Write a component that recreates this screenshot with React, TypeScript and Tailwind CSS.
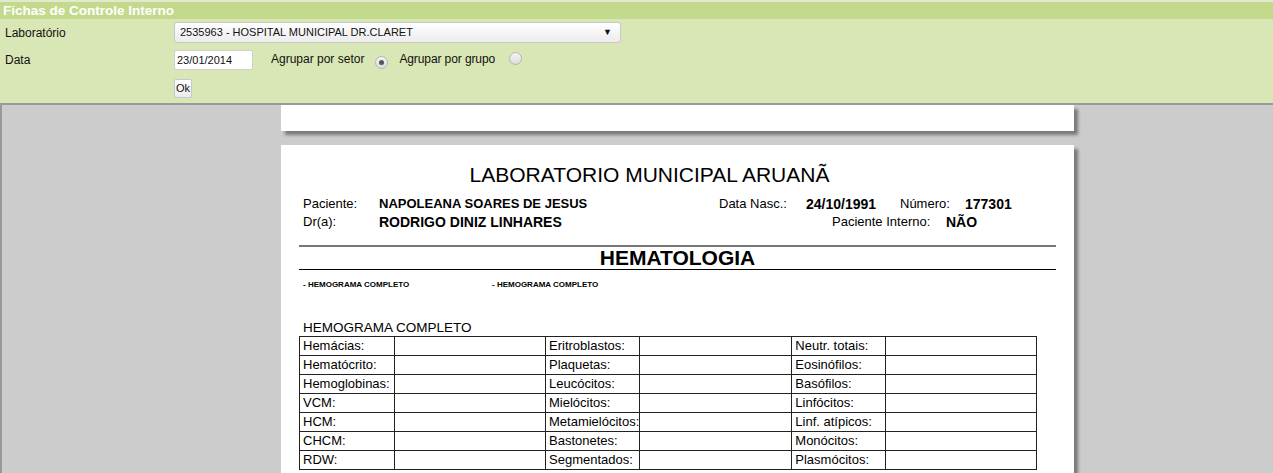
import React from 'react'

const rows: [string, string, string][] = [
  ['Hemácias:', 'Eritroblastos:', 'Neutr. totais:'],
  ['Hematócrito:', 'Plaquetas:', 'Eosinófilos:'],
  ['Hemoglobinas:', 'Leucócitos:', 'Basófilos:'],
  ['VCM:', 'Mielócitos:', 'Linfócitos:'],
  ['HCM:', 'Metamielócitos:', 'Linf. atípicos:'],
  ['CHCM:', 'Bastonetes:', 'Monócitos:'],
  ['RDW:', 'Segmentados:', 'Plasmócitos:'],
]

function Radio({ checked }: { checked?: boolean }) {
  return (
    <span className="inline-flex h-[13px] w-[13px] items-center justify-center rounded-full border border-[#b5b5b5] bg-gradient-to-b from-[#f4f4f4] to-[#dcdcdc]">
      {checked && <span className="h-[5px] w-[5px] rounded-full bg-[#555]" />}
    </span>
  )
}

function FilterPanel() {
  return (
    <div className="border-t-2 border-b-2 border-t-[#e2e9cf] border-b-[#9a9a9a] bg-[#d9e6b5] font-['Liberation_Sans',Arial,sans-serif]">
      <div className="h-[17px] bg-[#c3d98b] pl-[3px] text-[13.5px] font-bold leading-[17px] text-white">
        Fichas de Controle Interno
      </div>
      <div className="flex h-[84px] flex-col pt-[3px] text-[12px] text-[#111]">
        <div className="flex h-[21px] items-center">
          <div className="w-[174px] pl-[5px]">Laboratório</div>
          <div className="flex h-[21px] w-[447px] items-center justify-between rounded-[3px] border border-[#c8c8c8] bg-gradient-to-b from-white to-[#ececec] pr-[8px] pl-[5px] text-[11px]">
            <span>2535963 - HOSPITAL MUNICIPAL DR.CLARET</span>
            <span className="text-[9px]">▼</span>
          </div>
        </div>
        <div className="mt-[7px] flex h-[20px] items-center">
          <div className="w-[174px] pl-[5px]">Data</div>
          <div className="flex h-[20px] w-[79px] items-center rounded-[2px] border border-[#d0d0d0] bg-white pl-[2px] text-[11px]">
            23/01/2014
          </div>
          <span className="ml-[18px] -mt-[2px]">Agrupar por setor</span>
          <span className="ml-[11px] mt-[2px]"><Radio checked /></span>
          <span className="ml-[11px] -mt-[2px] tracking-[-0.1px]">Agrupar por grupo</span>
          <span className="ml-[14px] mt-[2px]"><Radio /></span>
        </div>
        <div className="mt-[9px] flex h-[19px] items-center pl-[174px]">
          <div className="flex h-[19px] w-[18px] items-center justify-center rounded-[2px] border border-[#c8c8c8] bg-gradient-to-b from-white to-[#ececec] text-[11px]">
            Ok
          </div>
        </div>
      </div>
    </div>
  )
}

function Report() {
  return (
    <div className="h-[360px] w-[793px] bg-white px-[18px] pt-[16px] font-['Liberation_Sans',Arial,sans-serif] text-black shadow-[4px_4px_3px_#7a7a7a]">
      <div className="pr-[56px] text-center text-[21px] leading-[28px]">LABORATORIO MUNICIPAL ARUANÃ</div>
      <div className="mt-[6px] pl-[4px] text-[13px] leading-[18px]">
        <div className="flex">
          <span className="w-[76px]">Paciente:</span>
          <span className="w-[340px] font-bold">NAPOLEANA SOARES DE JESUS</span>
          <span className="w-[87px]">Data Nasc.:</span>
          <span className="w-[94px] text-[14px] font-bold">24/10/1991</span>
          <span className="w-[65px]">Número:</span>
          <span className="text-[14px] font-bold">177301</span>
        </div>
        <div className="flex">
          <span className="w-[76px]">Dr(a):</span>
          <span className="w-[453px] text-[14px] font-bold">RODRIGO DINIZ LINHARES</span>
          <span className="w-[114px]">Paciente Interno:</span>
          <span className="text-[14px] font-bold">NÃO</span>
        </div>
      </div>
      <div className="mt-[14px] border-t-2 border-[#777]" />
      <div className="text-center text-[21px] font-bold leading-[22px]">HEMATOLOGIA</div>
      <div className="border-t border-black" />
      <div className="mt-[10px] flex pl-[4px] text-[8px] font-bold leading-[10px]">
        <span className="w-[189px]">- HEMOGRAMA COMPLETO</span>
        <span>- HEMOGRAMA COMPLETO</span>
      </div>
      <div className="mt-[29px] pl-[4px] text-[13.5px] leading-[17px]">HEMOGRAMA COMPLETO</div>
      <table className="border-collapse text-[13px] leading-[16px]">
        <tbody>
          {rows.map(([a, b, c]) => (
            <tr key={a} className="h-[19px]">
              <td className="w-[95px] border-[1.5px] border-[#222] pl-[3px] whitespace-nowrap">{a}</td>
              <td className="w-[151px] border-[1.5px] border-[#222]" />
              <td className="w-[94px] border-[1.5px] border-[#222] pl-[3px] whitespace-nowrap">{b}</td>
              <td className="w-[152px] border-[1.5px] border-[#222]" />
              <td className="w-[94px] border-[1.5px] border-[#222] pl-[3px] whitespace-nowrap">{c}</td>
              <td className="w-[151px] border-[1.5px] border-[#222]" />
            </tr>
          ))}
        </tbody>
      </table>
    </div>
  )
}

export default function App() {
  return (
    <div className="h-[473px] w-[1273px] overflow-hidden bg-[#cccccc]">
      <FilterPanel />
      <div className="h-[370px] overflow-hidden border-l-2 border-[#999] pl-[279px]">
        <div className="h-[26px] w-[793px] bg-white shadow-[4px_4px_3px_#7a7a7a]" />
        <div className="mt-[14px]">
          <Report />
        </div>
      </div>
    </div>
  )
}
